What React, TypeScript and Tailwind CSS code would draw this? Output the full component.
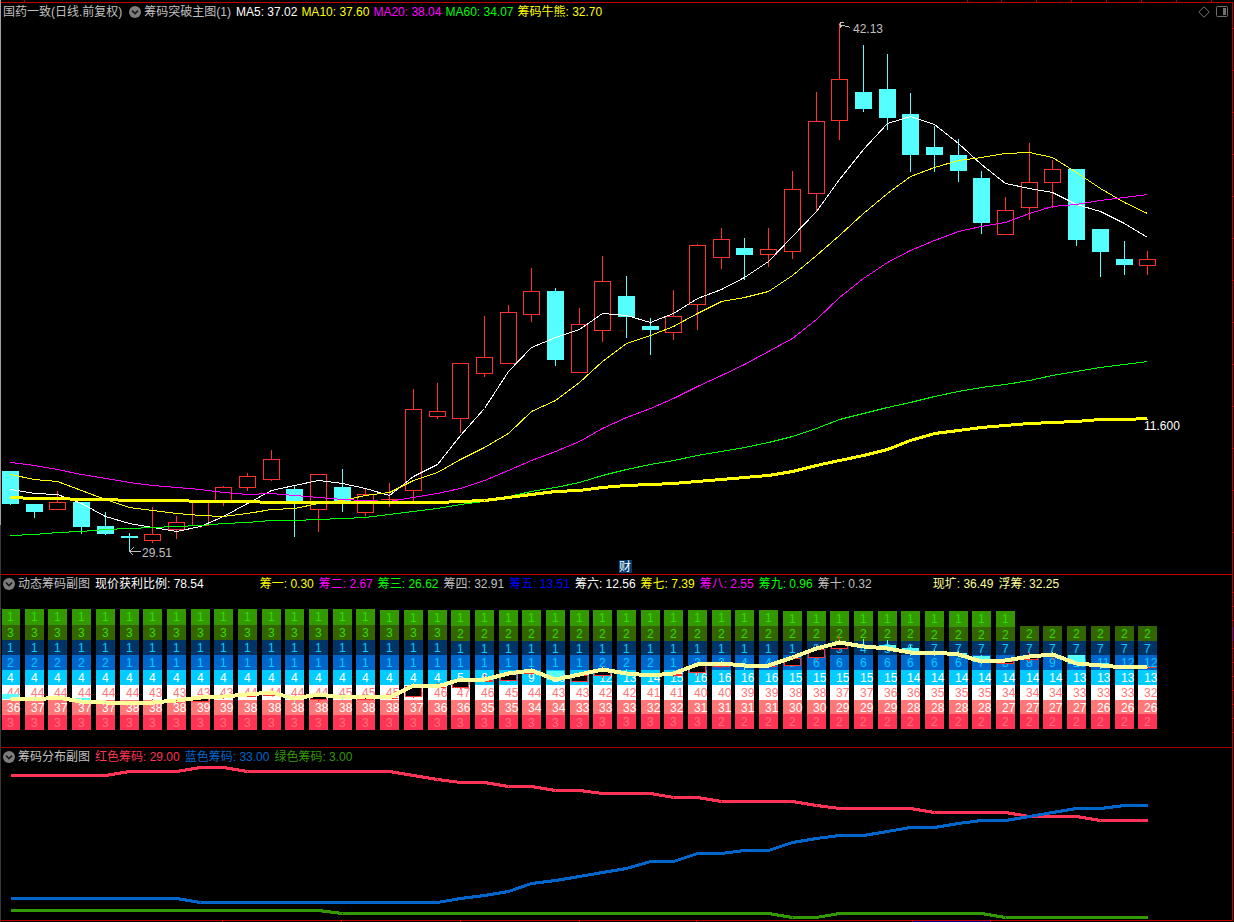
import type { ReactNode } from "react";

type Candle = { up: boolean; high: number; top: number; bottom: number; low: number };

const COUNT = 49;
const INDEXES = Array.from({ length: COUNT }, (_, i) => i);
const xAt = (i: number) => Math.round(10.1 + 23.69 * i);

// direction (1 = rising), high, body top, body bottom, low
const RAW: number[][] = [
  [0, 471, 471, 504, 505], [0, 504, 504, 512, 518], [1, 491, 502, 510, 510], [0, 502, 502, 527, 534],
  [0, 512, 526, 534, 535], [0, 533, 536, 538, 551], [1, 507, 534, 541, 543], [1, 516, 522, 530, 539],
  [1, 502, 502, 526, 528], [1, 486, 487, 502, 506], [1, 473, 476, 488, 491], [1, 450, 459, 480, 481],
  [0, 485, 489, 504, 537], [1, 474, 474, 510, 532], [0, 469, 487, 502, 512], [1, 488, 494, 513, 516],
  [1, 483, 499, 500, 507], [1, 389, 409, 491, 501], [1, 383, 411, 417, 419], [1, 363, 363, 419, 433],
  [1, 316, 357, 374, 377], [1, 305, 312, 364, 364], [1, 268, 291, 315, 322], [0, 288, 291, 360, 366],
  [1, 308, 324, 373, 373], [1, 256, 281, 331, 342], [0, 276, 296, 317, 338], [0, 318, 326, 330, 355],
  [1, 290, 316, 333, 340], [1, 244, 245, 305, 330], [1, 228, 239, 258, 269], [0, 238, 248, 255, 280],
  [1, 228, 249, 255, 267], [1, 171, 189, 252, 259], [1, 92, 121, 194, 211], [1, 23, 79, 121, 140],
  [0, 45, 92, 109, 112], [0, 54, 89, 118, 130], [0, 93, 114, 155, 172], [0, 126, 147, 155, 172],
  [0, 139, 155, 171, 182], [0, 171, 178, 223, 234], [1, 197, 210, 235, 235], [1, 143, 182, 208, 220],
  [1, 160, 169, 183, 208], [0, 169, 169, 240, 246], [0, 229, 229, 252, 277], [0, 241, 259, 265, 275],
  [1, 251, 259, 266, 275],
];

const CANDLES: Candle[] = RAW.map(([dir, high, top, bottom, low]) => ({ up: dir === 1, high, top, bottom, low }));

const MA5 = [489, 493, 494, 503, 516, 523, 527, 531, 526, 516, 503, 490, 485, 480, 483, 488, 495, 476, 464, 435, 408, 371, 347, 337, 329, 313, 315, 322, 313, 298, 289, 277, 261, 236, 211, 179, 149, 123, 116, 124, 143, 164, 183, 188, 192, 204, 211, 223, 237];
const MA10 = [474, 479, 481, 490, 499, 507, 510, 513, 515, 516, 513, 509, 508, 503, 500, 495, 492, 480, 472, 459, 447, 433, 411, 400, 382, 361, 343, 335, 326, 313, 301, 297, 291, 275, 255, 235, 213, 193, 176, 167, 160, 157, 153, 152, 157, 172, 188, 202, 213];
const MA20 = [462, 465, 469, 474, 478, 482, 485, 487, 489, 492, 494, 493, 495, 497, 499, 500, 501, 497, 493, 488, 480, 470, 460, 451, 441, 428, 417, 408, 398, 386, 375, 364, 351, 338, 319, 297, 278, 262, 250, 240, 231, 226, 222, 213, 206, 204, 200, 197, 194];
const MA60 = [535, 534, 532, 531, 529, 528, 527, 526, 525, 523, 522, 520, 520, 519, 518, 517, 514, 511, 508, 504, 501, 496, 491, 487, 482, 475, 469, 464, 460, 455, 451, 447, 442, 436, 428, 419, 413, 407, 402, 396, 391, 387, 384, 380, 375, 371, 367, 364, 361];
const BULL_BEAR = [497, 498, 498, 499, 499, 500, 500, 500, 501, 501, 501, 502, 502, 502, 502, 502, 502, 502, 502, 501, 500, 497, 494, 491, 490, 487, 485, 484, 483, 481, 479, 477, 475, 471, 465, 460, 455, 449, 440, 433, 430, 427, 425, 423, 422, 421, 419, 419, 418];

const fill = (...runs: [number, number][]) => runs.flatMap(([value, n]) => Array<number>(n).fill(value));

const RED_LINE = fill([775, 5], [771, 3], [767, 2], [771, 7], [775, 1], [779, 1], [782, 2], [786, 2], [790, 2], [793, 3], [797, 2], [801, 4], [805, 1], [808, 4], [812, 4], [816, 3], [820, 3]);
const BLUE_LINE = [...fill([898, 8], [902, 11]), 898, 895, 891, 883, 880, 876, 872, 868, 861, 861, 853, 853, 850, 850, 842, 838, 835, 835, 831, 827, 827, 823, 820, 820, 816, 812, 808, 808, 805, 805];
const GREEN_LINE = fill([910, 14], [913, 19], [917, 2], [913, 7], [917, 7]);

const ROWS: { bg: string; ink: string; values: number[] }[] = [
  { bg: "#339900", ink: "#33dd00", values: fill([1, 49]) },
  { bg: "#336600", ink: "#33dd00", values: fill([3, 19], [2, 30]) },
  { bg: "#003366", ink: "#00ccff", values: [...fill([1, 34]), 2, 3, 4, 5, 6, ...fill([7, 10])] },
  { bg: "#0066cc", ink: "#00ccff", values: [...fill([2, 5], [1, 20], [2, 3], [1, 1], [2, 2], [4, 2], [5, 1], [6, 7]), 7, 8, 8, 9, 10, 11, 12, 12] },
  { bg: "#00ccff", ink: "#ffffff", values: [...fill([4, 19]), 5, 6, 7, 9, 10, 11, 12, 13, 14, 15, ...fill([16, 4], [15, 5], [14, 7], [13, 4])] },
  { bg: "#ffffff", ink: "#ff7777", values: [...fill([44, 6], [43, 4], [44, 4], [45, 3], [46, 2]), 47, 46, 45, 44, 43, 43, 42, 42, 41, 41, 40, 40, 39, 39, 38, 38, 37, 37, 36, 36, 35, 35, 35, 34, 34, 34, 33, 33, 33, 32] },
  { bg: "#ff7777", ink: "#ffffff", values: [36, ...fill([37, 4], [38, 3], [39, 2], [38, 7], [37, 1], [36, 2], [35, 2], [34, 2], [33, 3], [32, 2], [31, 4], [30, 2], [29, 3], [28, 4], [27, 4], [26, 3])] },
  { bg: "#ff3355", ink: "#ff7777", values: fill([3, 30], [2, 19]) },
];

function rowEdges(i: number): number[] {
  return [
    i < 16 ? 609 : i < 33 ? 610 : 611,
    i < 19 ? 625 : i >= 39 && i < 43 ? 627 : 626,
    i < 19 ? 640 : 641,
    655,
    670,
    685,
    700,
    i < 25 ? 715 : 714,
    i < 19 ? 730 : 729,
  ];
}

function Line({ ys, color, width = 1 }: { ys: number[]; color: string; width?: number }) {
  return (
    <polyline
      points={ys.map((y, i) => `${xAt(i) + 0.5},${y + 0.5}`).join(" ")}
      fill="none"
      stroke={color}
      strokeWidth={width}
      strokeLinejoin="round"
    />
  );
}

function CandleShape({ candle, x, paper }: { candle: Candle; x: number; paper: string }) {
  const { up, high, top, bottom, low } = candle;
  const height = Math.max(bottom - top, 1);
  if (!up) {
    return (
      <g fill="#55ffff">
        <rect x={x} y={high} width={1} height={low - high} />
        <rect x={x - 8} y={top} width={17} height={height} />
      </g>
    );
  }
  return (
    <g fill="#ff3232">
      {top > high && <rect x={x} y={high} width={1} height={top - high} />}
      {low > bottom && <rect x={x} y={bottom} width={1} height={low - bottom} />}
      <rect x={x - 8} y={top} width={17} height={height} />
      {height > 2 && <rect x={x - 7} y={top + 1} width={15} height={height - 2} fill={paper} />}
    </g>
  );
}

function Toggle({ label }: { label: string }) {
  return (
    <button type="button" aria-label={label} className="shrink-0">
      <svg viewBox="0 0 12 12" className="block size-3">
        <circle cx="6" cy="6" r="6" fill="#7d7d7d" />
        <path d="M3 4.6 6 7.6 9 4.6" fill="none" stroke="#1a1a1a" strokeWidth="1.6" />
      </svg>
    </button>
  );
}

function Header({ children }: { children: ReactNode }) {
  return <header className="flex h-[18px] items-center gap-[5px] pl-0.5 whitespace-nowrap">{children}</header>;
}

const TOP_TICKS = [24, 967, 1001, 1036, 1071, 1106, 1141, 1176, 1211];
const BOTTOM_TICKS = [222, 341, 460, 579, 696, 912, 990];

function toOverlay(y: number) {
  return Math.round(633.2 + 0.13 * y);
}

export default function App() {
  return (
    <main className="flex min-h-screen bg-black font-['Liberation_Sans','Noto_Sans_CJK_SC',sans-serif] text-xs leading-4 text-[#c0c0c0]">
      <div className="flex w-px shrink-0 flex-col">
        <div className="h-[525px] bg-[#a0a0a0]" />
        <div className="flex-1 bg-[#383838]" />
      </div>

      <div className="flex min-w-0 flex-1 flex-col">
        <svg viewBox="1 0 1232 2" className="block w-full" shapeRendering="crispEdges">
          {TOP_TICKS.map((x) => (
            <rect key={x} x={x} y={0} width={1} height={2} fill="#b00000" />
          ))}
        </svg>

        <div className="border-y border-r border-[#c00000]">
          <section>
            <div className="flex items-center justify-between pr-1 pb-px">
              <Header>
                <h1 className="pr-0.5">国药一致(日线.前复权)</h1>
                <div className="flex items-center gap-[3px]">
                  <Toggle label="主图指标" />
                  <h2>筹码突破主图(1)</h2>
                </div>
                <div className="flex gap-1">
                  <span className="text-white">MA5: 37.02</span>
                  <span className="text-[#ffff00]">MA10: 37.60</span>
                  <span className="text-[#ff00ff]">MA20: 38.04</span>
                  <span className="text-[#00ff00]">MA60: 34.07</span>
                  <span className="text-[#ffff00]">筹码牛熊: 32.70</span>
                </div>
              </Header>
              <div className="flex items-center gap-1.5">
                <button type="button" aria-label="标记">
                  <svg viewBox="0 0 12 12" className="block size-3">
                    <path d="M6 .8 11.2 6 6 11.2 .8 6Z" fill="none" stroke="#707070" />
                  </svg>
                </button>
                <button type="button" aria-label="侧栏">
                  <svg viewBox="0 0 12 12" className="block size-3">
                    <rect x=".5" y=".5" width="11" height="10" rx="1" fill="none" stroke="#707070" />
                    <rect x="7" y="2" width="3" height="7" fill="#707070" />
                  </svg>
                </button>
              </div>
            </div>

            <svg viewBox="1 22 1231 552" className="block w-full" shapeRendering="crispEdges">
              {CANDLES.map((candle, i) => (
                <CandleShape key={i} candle={candle} x={xAt(i)} paper="#000000" />
              ))}
              <Line ys={MA5} color="#ffffff" />
              <Line ys={MA10} color="#ffff00" />
              <Line ys={MA20} color="#ff00ff" />
              <Line ys={MA60} color="#00ff00" />
              <Line ys={BULL_BEAR} color="#ffff00" width={3} />
              <g fill="none" stroke="#c0c0c0">
                <path d="M839.5 24.5 L850.5 27.5 M843.5 22.5 H840.5 V27.5 M840.5 24.5 L842.5 27.5" />
                <path d="M129.5 551.5 H140.5 M133.5 547.5 L129.5 551.5 L133.5 555.5" />
              </g>
              <text x="853" y="33" fill="#c0c0c0">42.13</text>
              <text x="142" y="557" fill="#c0c0c0">29.51</text>
              <text x="1144" y="430" fill="#ffffff">11.600</text>
              <rect x="619" y="560" width="13" height="13" fill="#003b73" />
              <text x="619" y="571" fill="#ffffff">财</text>
            </svg>
          </section>

          <section className="border-t border-[#c00000]">
            <Header>
              <div className="flex items-center gap-[3px]">
                <Toggle label="动态筹码指标" />
                <h2>动态筹码副图</h2>
              </div>
              <span className="text-white">现价获利比例: 78.54</span>
              <span className="ml-[51px] text-[#ffff00]">筹一: 0.30</span>
              <span className="text-[#ff00ff]">筹二: 2.67</span>
              <span className="text-[#00ff00]">筹三: 26.62</span>
              <span>筹四: 32.91</span>
              <span className="text-[#0000ff]">筹五: 13.51</span>
              <span className="text-white">筹六: 12.56</span>
              <span className="text-[#ffff00]">筹七: 7.39</span>
              <span className="text-[#ff00ff]">筹八: 2.55</span>
              <span className="text-[#00ff00]">筹九: 0.96</span>
              <span>筹十: 0.32</span>
              <span className="ml-14 text-[#ffff99]">现圹: 36.49</span>
              <span className="text-[#ffff99]">浮筹: 32.25</span>
            </Header>

            <svg viewBox="1 593 1231 154" className="block w-full" shapeRendering="crispEdges">
              {INDEXES.map((i) => {
                const edges = rowEdges(i);
                const x = xAt(i);
                const left = Math.max(x - 9, 2);
                return (
                  <g key={i}>
                    {ROWS.map((row, r) =>
                      r === 0 && i > 42 ? null : (
                        <g key={r}>
                          <rect x={left} y={edges[r]} width={x + 10 - left} height={edges[r + 1] - edges[r]} fill={row.bg} />
                          <text x={x - 3} y={edges[r] + 12} fill={row.ink}>
                            {row.values[i]}
                          </text>
                        </g>
                      ),
                    )}
                  </g>
                );
              })}
              {CANDLES.map((c, i) => (
                <CandleShape
                  key={i}
                  x={xAt(i)}
                  paper="#000000"
                  candle={{
                    up: c.up,
                    high: toOverlay(c.high),
                    top: toOverlay(c.top),
                    bottom: toOverlay(c.bottom),
                    low: toOverlay(c.low),
                  }}
                />
              ))}
              <Line ys={CANDLES.map((c) => toOverlay(c.up ? c.top : c.bottom) - 1)} color="#ffff99" width={4} />
            </svg>
          </section>

          <section className="border-t border-[#a00000]">
            <Header>
              <div className="flex items-center gap-[3px]">
                <Toggle label="筹码分布指标" />
                <h2>筹码分布副图</h2>
              </div>
              <span className="text-[#ff3355]">红色筹码: 29.00</span>
              <span className="text-[#0066cc]">蓝色筹码: 33.00</span>
              <span className="text-[#339900]">绿色筹码: 3.00</span>
            </Header>
            <svg viewBox="1 766 1231 154" className="block w-full" shapeRendering="crispEdges">
              <Line ys={RED_LINE} color="#ff3355" width={3} />
              <Line ys={BLUE_LINE} color="#0066cc" width={3} />
              <Line ys={GREEN_LINE} color="#339900" width={3} />
            </svg>
          </section>
        </div>

        <svg viewBox="1 921 1232 1" className="block w-full" shapeRendering="crispEdges">
          <rect x={912} y={921} width={78} height={1} fill="#000080" />
          {BOTTOM_TICKS.map((x) => (
            <rect key={x} x={x} y={921} width={1} height={1} fill="#b00000" />
          ))}
        </svg>
      </div>

      <svg viewBox="0 0 1 922" className="block w-px shrink-0 self-start" shapeRendering="crispEdges">
        {Array.from({ length: 13 }, (_, k) => (
          <rect key={k} x={0} y={28 + k * 42} width={1} height={1} fill="#b00000" />
        ))}
        {Array.from({ length: 11 }, (_, k) => (
          <rect key={k} x={0} y={592 + k * 14} width={1} height={1} fill="#b00000" />
        ))}
        <rect x={0} y={627} width={1} height={14} fill="#000080" />
      </svg>
    </main>
  );
}
